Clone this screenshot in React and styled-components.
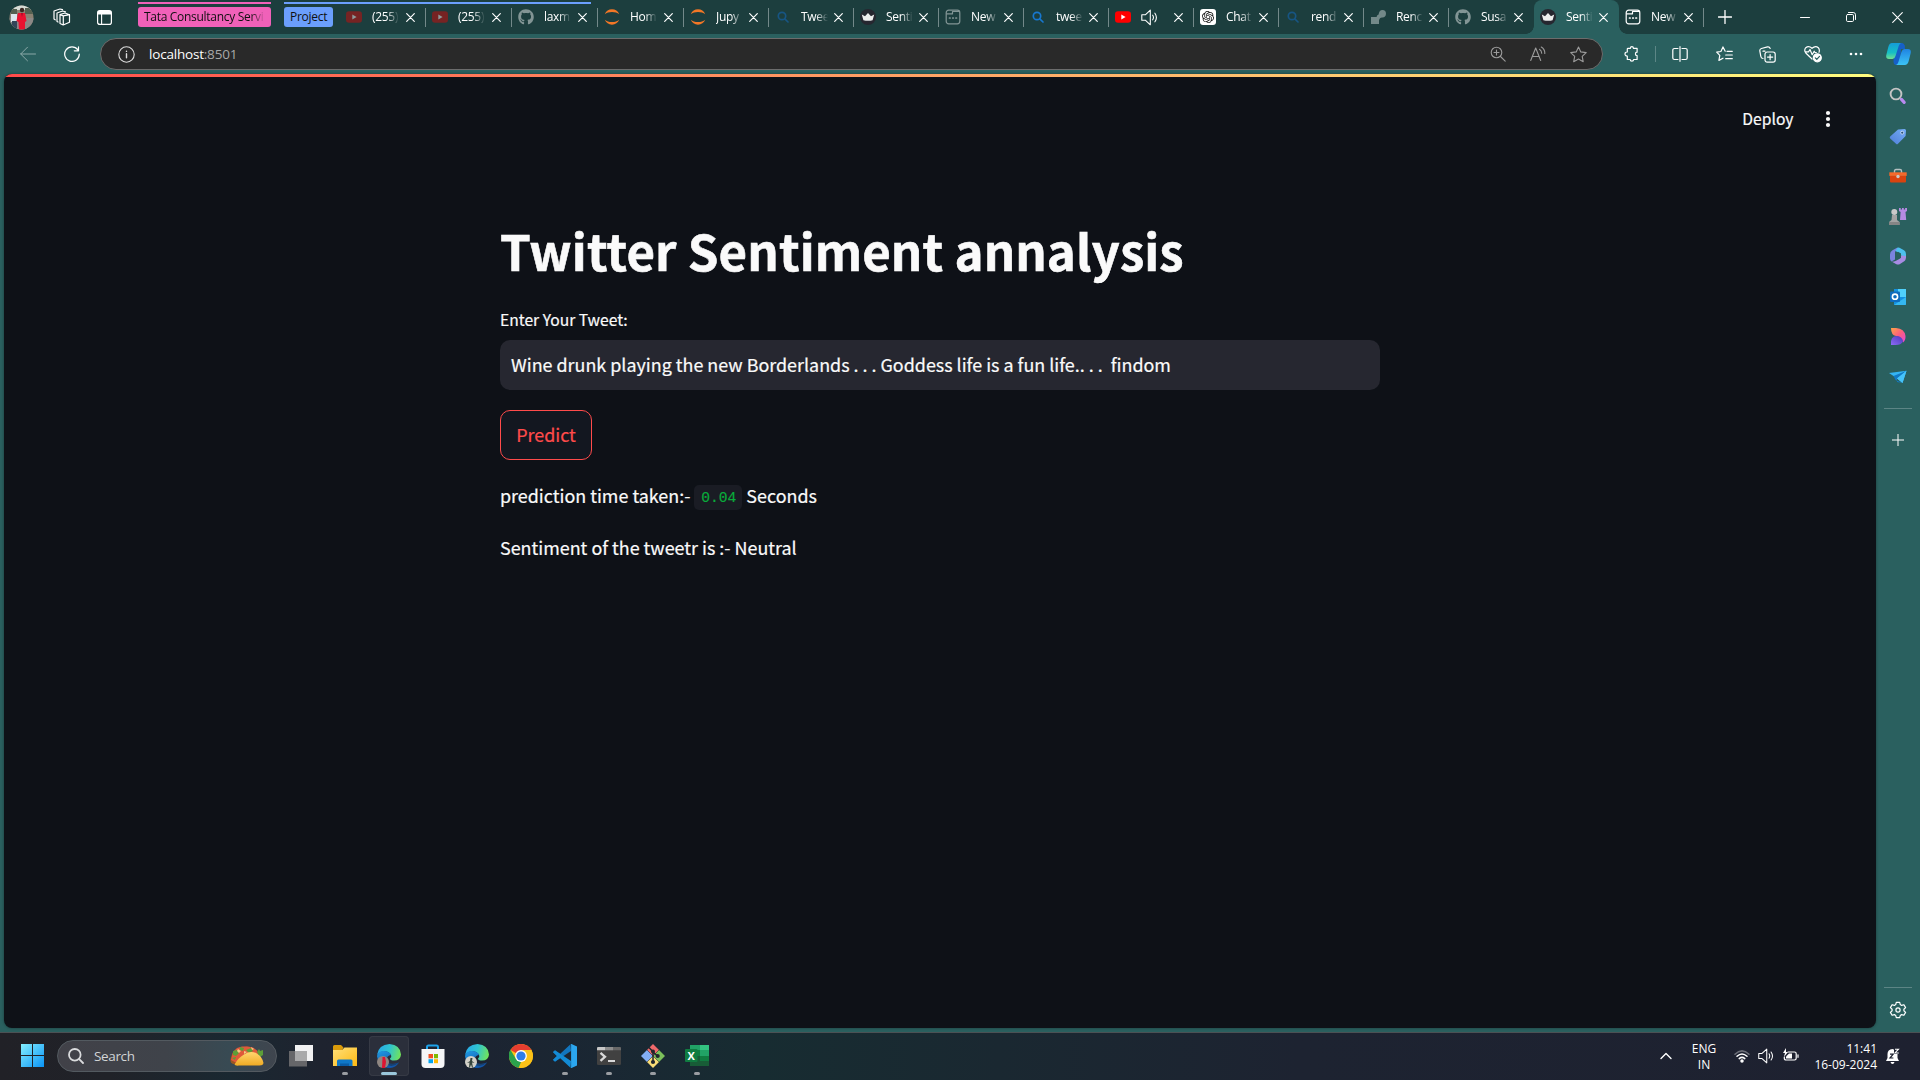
import React from "react";
import styled, { createGlobalStyle, css } from "styled-components";
import { FaGithub } from "react-icons/fa";
import { SiOpenai } from "react-icons/si";

const ui = `"Open Sans", "Noto Sans", sans-serif`;
const source = `"Noto Sans CJK SC", "Noto Sans CJK JP", sans-serif`;

const GlobalStyle = createGlobalStyle`
  * { box-sizing: border-box; }
  html, body { margin: 0; padding: 0; overflow: hidden; background: #2a605f; }
  svg { display: block; flex: none; }
  h1, p { margin: 0; }
  button { font: inherit; padding: 0; border: 0; background: none; color: inherit; }
`;

const Screen = styled.div`
  width: 1920px;
  height: 1080px;
  display: flex;
  flex-direction: column;
  overflow: hidden;
  background: #2a605f;
  color: #fff;
  font-family: ${ui};
`;

/* ---------- tab strip ---------- */

const TabStrip = styled.header`
  display: flex;
  height: 34px;
  flex: none;
  background: #1c3e3e;
`;

const StripTools = styled.div`
  display: flex;
  align-items: center;
  width: 138px;
  padding-left: 9px;
  gap: 19px;
`;

const TabGroup = styled.div`
  display: flex;
  margin-right: ${(p) => p.$after || 0}px;
  background: linear-gradient(${(p) => p.$color}, ${(p) => p.$color}) no-repeat 0 2px / ${(p) => p.$line}px 2px;
`;

const GroupLabel = styled.div`
  width: ${(p) => p.$width}px;
  height: 20px;
  margin: 7px ${(p) => p.$after || 0}px 0 0;
  padding: 0 6px;
  border-radius: 3px;
  background: ${(p) => p.$color};
  color: #101010;
  font-size: 12px;
  line-height: 20px;
  letter-spacing: ${(p) => p.$track}px;
  white-space: nowrap;
`;

const LabelText = styled.span`
  display: block;
  ${(p) => p.$fade && css`mask-image: linear-gradient(90deg, #000 calc(100% - 14px), transparent);`}
`;

const TabBox = styled.div`
  position: relative;
  display: flex;
  align-items: center;
  width: ${(p) => p.$width}px;
  height: 34px;
  padding-left: 6px;
  ${(p) =>
    p.$active
      ? css`
          background: #2a605f;
          border-radius: 8px 8px 0 0;
          &::before, &::after {
            content: "";
            position: absolute;
            bottom: 0;
            width: 8px;
            height: 8px;
          }
          &::before { left: -8px; background: radial-gradient(circle at 0 0, transparent 7.5px, #2a605f 8px); }
          &::after { right: -8px; background: radial-gradient(circle at 100% 0, transparent 7.5px, #2a605f 8px); }
        `
      : !p.$bare &&
        css`background: linear-gradient(#73898a, #73898a) no-repeat right 0 top 8px / 1px 19px;`}
`;

const Favicon = styled.div`
  width: 16px;
  height: 16px;
  margin-right: 10px;
  opacity: ${(p) => (p.$dim ? 0.45 : 1)};
`;

const TabTitle = styled.div`
  width: 27px;
  margin-right: ${(p) => (p.$wide ? 7 : 6)}px;
  font-size: 12px;
  line-height: 16px;
  letter-spacing: -0.3px;
  white-space: nowrap;
  mask-image: linear-gradient(90deg, #000 15px, transparent 27px);
`;

const NewTab = styled.button`
  width: 42px;
  display: flex;
  align-items: center;
  justify-content: center;
`;

const WindowButtons = styled.div`
  display: flex;
  margin-left: auto;
`;

const WindowButton = styled.button`
  width: 46px;
  display: flex;
  align-items: center;
  justify-content: center;
`;

/* ---------- toolbar ---------- */

const Toolbar = styled.div`
  display: flex;
  align-items: center;
  height: 40px;
  flex: none;
`;

const ToolButton = styled.button`
  display: flex;
  flex: none;
  align-items: center;
  justify-content: center;
  width: ${(p) => p.$width || 44}px;
  height: 32px;
  padding-left: ${(p) => p.$shift || 0}px;
  opacity: ${(p) => p.$opacity || 1};
`;

const AddressBar = styled.div`
  display: flex;
  flex: none;
  align-items: center;
  width: 1503px;
  height: 32px;
  margin-left: 12px;
  padding: 0 4px 0 17px;
  border: 1px solid #6c6c6c;
  border-radius: 16px;
  background: #292929;
  color: #9b9b9b;
`;

const Url = styled.div`
  flex: 1;
  margin-left: 14px;
  font-size: 13.5px;
  line-height: 20px;
  letter-spacing: -0.2px;
  color: #a8a8a8;
  strong { font-weight: 400; color: #fff; }
`;

const ToolSeparator = styled.i`
  width: 1px;
  height: 16px;
  background: #5c8686;
`;

/* ---------- body: page and side bar ---------- */

const Body = styled.div`
  display: flex;
  height: 958px;
  flex: none;
  padding: 0 0 4px 4px;
`;

const Page = styled.main`
  width: 1872px;
  height: 954px;
  border-radius: 8px;
  overflow: hidden;
  background: #0e1117;
  box-shadow: 0 0 3px rgba(0, 0, 0, 0.4);
  font-family: ${source};
  color: #fafafa;
  -webkit-text-stroke: 0.2px currentColor;
`;

const Decoration = styled.div`
  height: 3px;
  background: linear-gradient(90deg, #ff4b4b, #fffd80);
`;

const AppHeader = styled.div`
  display: flex;
  justify-content: flex-end;
  align-items: center;
  height: 84px;
  padding-right: 44px;
`;

const Deploy = styled.button`
  margin-right: 30.5px;
  font-size: 15.65px;
  line-height: 24px;
`;

const Content = styled.section`
  width: 880px;
  margin: 56px auto 0;
  font-size: 17.91px;
`;

const Title = styled.h1`
  font-size: 49.2px;
  font-weight: 700;
  line-height: 66px;
  letter-spacing: 0.08px;
  -webkit-text-stroke: 0.6px #fafafa;
  white-space: nowrap;
`;

const FieldLabel = styled.label`
  display: block;
  margin: 22px 0 5px;
  font-size: 15.65px;
  line-height: 30px;
`;

const Input = styled.div`
  height: 50px;
  padding: 0 11px;
  border-radius: 10px;
  background: #262730;
  line-height: 48px;
  white-space: pre;
`;

const Predict = styled.button`
  display: block;
  width: 92px;
  height: 50px;
  margin: 20px 0 19px;
  padding-bottom: 2px;
  border: 1px solid #ff4b4b;
  border-radius: 10px;
  background: #131720;
  color: #ff4b4b;
`;

const Line = styled.p`
  display: flex;
  align-items: center;
  height: 32px;
  margin-bottom: 20px;
  white-space: pre;
`;

const Code = styled.code`
  width: 48px;
  height: 25px;
  margin: 4px 4px 0 4px;
  padding-left: 1px;
  border-radius: 5px;
  background: #1a1c24;
  color: #09ab3b;
  font: 14.6px/27px "Liberation Mono", monospace;
  text-align: center;
`;

const SideBar = styled.aside`
  width: 44px;
  display: flex;
  flex-direction: column;
  align-items: center;
  padding-top: 2px;
`;

const SideItem = styled.div`
  width: 44px;
  height: ${(p) => p.$height || 40.1}px;
  display: flex;
  align-items: center;
  justify-content: center;
`;

const SideRule = styled.i`
  width: 28px;
  height: 1px;
  background: #5c8585;
  margin-top: ${(p) => p.$top || 0};
  margin-bottom: ${(p) => p.$after || 0};
`;

/* ---------- task bar ---------- */

const TaskBar = styled.footer`
  display: flex;
  align-items: center;
  height: 48px;
  flex: none;
  padding: 0 0 1px 21px;
  border-top: 1px solid #4b5154;
  background: linear-gradient(90deg, #212127 0, #202228 110px, #1a2831 230px, #1e232f 320px, #1d2230 420px, #1a2733 600px, #172c31 760px, #1a2831 1000px, #1d2331 1300px, #1e2130 1920px);
`;

const SearchBox = styled.div`
  display: flex;
  align-items: center;
  width: 220px;
  height: 32px;
  margin: 0 2px 0 12px;
  padding: 0 12px 0 10px;
  border: 1px solid #535a60;
  border-radius: 16px;
  background: linear-gradient(90deg, #414148, #3f434a 50%, #384a53 78%, #3f454e);
  color: #d2d4d6;
  font-size: 13.5px;
  letter-spacing: -0.35px;
`;

const SearchText = styled.span`
  flex: 1;
  margin-left: 10px;
`;

const TaskItem = styled.div`
  display: flex;
  flex-direction: column;
  align-items: center;
  width: 40px;
  height: 40px;
  margin: 0 2px;
  padding-top: 7px;
  border-radius: 4px;
  ${(p) => p.$active && css`background: #2b2f3b; box-shadow: inset 0 0 0 1px #363a45;`}
`;

const Indicator = styled.i`
  width: ${(p) => (p.$active ? 16 : 6)}px;
  height: 3px;
  margin-top: 5px;
  border-radius: 2px;
  background: ${(p) => (p.$active ? "#9ac7dc" : "#9a9da2")};
`;

const Tray = styled.div`
  display: flex;
  align-items: center;
  margin-left: auto;
  padding-right: 19px;
`;

const TrayText = styled.div`
  width: ${(p) => p.$width}px;
  margin: 0 ${(p) => p.$after}px 0 ${(p) => p.$before}px;
  padding-top: 1px;
  font-size: 12px;
  line-height: 16px;
  text-align: ${(p) => p.$align};
  white-space: nowrap;
`;

const TrayIcons = styled.div`
  display: flex;
  gap: 8px;
`;

/* ---------- drawings ---------- */

const Stroke = ({ w = 16, h, box, sw = 1, color = "currentColor", children }) => (
  <svg width={w} height={h || w} viewBox={box || `0 0 ${w} ${h || w}`} fill="none" stroke={color} strokeWidth={sw} strokeLinecap="round" strokeLinejoin="round">
    {children}
  </svg>
);

const Cross = ({ size = 9, sw = 1.2 }) => (
  <Stroke w={size} sw={sw}><path d={`M.7.7 ${size - 0.7} ${size - 0.7}M${size - 0.7}.7.7 ${size - 0.7}`} /></Stroke>
);

const Avatar = () => (
  <svg width="25" height="25" viewBox="0 0 25 25">
    <clipPath id="avatar"><circle cx="12.5" cy="12.5" r="12" /></clipPath>
    <g clipPath="url(#avatar)">
      <path d="M0 0h25v25H0z" fill="#8b8273" />
      <path d="M0 0h25v5H0z" fill="#d8dcd6" />
      <path d="M2 4h6v5H2zM16 3h8v6h-8z" fill="#556050" />
      <path d="M0 13h25v12H0z" fill="#8c8886" />
      <path d="M2 9h6v8H2z" fill="#dce6ec" /><path d="M3 16h5v9H3z" fill="#344458" />
      <circle cx="13" cy="5" r="2.2" fill="#3d2722" />
      <path d="M9 8h7l1.500 8-1.500 1v8h-6l-.5-8-2-1z" fill="#ea1230" />
      <path d="M12 8h2l-1 4z" fill="#a90824" />
    </g>
  </svg>
);

const Workspaces = () => (
  <Stroke w={18} sw={1.2}>
    <path d="M7 6.500 12 5l4.500 1.700v7.500L10.200 17 7 15.500zM7 6.600l3.300 1.300 6.200-1.200M10.300 8v9" />
    <path d="M5 14 4 13.500V5l5.500-2 3 .8M2.200 11.800 1 11V3l6-2 2.500.7" />
  </Stroke>
);

const TabActionsBox = styled.div`
  margin-left: 7px;
`;
const TabActions = () => (
  <TabActionsBox>
    <svg width="15" height="15" viewBox="0 0 15 15"><rect x=".6" y=".6" width="13.8" height="13.8" rx="2.2" fill="none" stroke="#fff" strokeWidth="1.2" /><path d="M1 1h13v3.500H1z" fill="#fff" /><path d="M4.600 4v10" stroke="#fff" strokeWidth="1.100" /></svg>
  </TabActionsBox>
);

const YouTube = () => (
  <svg width="16" height="16" viewBox="0 0 16 16"><rect y="2.3" width="16" height="11.4" rx="3" fill="#f00" /><path d="M6.3 5.6 10.6 8l-4.3 2.4z" fill="#fff" /></svg>
);
const YouTubeMuted = () => (
  <svg width="16" height="16" viewBox="0 0 16 16"><rect y="2.3" width="16" height="11.4" rx="3" fill="#762323" /><path d="M6.3 5.6 10.6 8l-4.3 2.4z" fill="#8e9a9a" /></svg>
);
const Jupyter = () => (
  <svg width="16" height="16" viewBox="0 0 16 16" fill="#f37726"><path d="M.8 5.200C2 2.200 4.700.3 8 .3s6 1.900 7.200 4.900C13.400 3.600 10.900 2.900 8 2.900S2.600 3.600.8 5.200zM.8 10.800C2 13.800 4.700 15.700 8 15.700s6-1.900 7.200-4.900c-1.800 1.600-4.300 2.300-7.200 2.300s-5.400-.7-7.200-2.300z" /></svg>
);
const BingSearch = ({ color }) => (
  <Stroke w={16} sw={1.7} color={color}><circle cx="7" cy="7" r="3.7" /><path d="M9.800 9.900 13 13" /></Stroke>
);
const Crown = () => (
  <svg width="16" height="16" viewBox="0 0 16 16"><circle cx="8" cy="8" r="8" fill="#262730" /><path d="M1.800 5.600 5 7.300 8 3.900l3 3.400 3.200-1.700-1.600 5.600q-4.600 1-9.200 0z" fill="#eee" /></svg>
);
const NewPage = () => (
  <Stroke w={16} sw={1.2}><rect x="1.200" y="1.200" width="13.600" height="13.600" rx="2.500" /><path d="M1.500 4.800h6V2.500h6.500" /><path d="M4.500 9h.6M7.700 9h.6M10.900 9h.6" strokeWidth="1.700" /></Stroke>
);
const ChatGpt = () => (
  <svg width="16" height="16" viewBox="0 0 16 16"><rect width="16" height="16" rx="3" fill="#fff" /><g transform="translate(2 2)"><SiOpenai size={12} color="#111" /></g></svg>
);
const RenderMark = () => (
  <svg width="16" height="16" viewBox="0 0 16 16" fill="#dce5e5"><path d="M1 8h5.600q0-2 2-2.500C9 3 10 1 12.500 1A3.700 3.700 0 0 1 12 8.400q-2.500 0-3 3V15H1z" /></svg>
);

const Speaker = ({ w = 17 }) => (
  <Stroke w={w} box="0 0 17 17" sw={1.1}><path d="M.8 5.800h3.500L9.300 1.200v14.600l-5-4.600H.8zM11.700 6.200q1.500 2.300 0 4.600M13.900 4.200q3 4.300 0 8.600" /></Stroke>
);

const Copilot = () => (
  <svg width="25" height="24" viewBox="0 0 25 24">
    <defs>
      <linearGradient id="cpA" x1="0" y1="0" x2="0" y2="1"><stop offset="0" stopColor="#159bd8" /><stop offset=".6" stopColor="#16bfc4" /><stop offset="1" stopColor="#71df91" /></linearGradient>
      <linearGradient id="cpB" x1="0" y1="0" x2="0" y2="1"><stop offset="0" stopColor="#1f83e2" /><stop offset="1" stopColor="#3cc4f5" /></linearGradient>
    </defs>
    <path d="M8 1h8q2 0 2.800 2.500L19 7h-4L14 23h-4q-2 0-2.500-3z" fill="#1660c7" />
    <path d="M6 1h9q-1.600.8-2.300 3L9.500 14q-.8 3-3 3H3q-3.500 0-2.700-4l2-8Q3.300 1 6 1z" fill="url(#cpA)" />
    <path d="M18.500 7H22q3.500 0 2.700 4l-2 8q-1 4-4 4H10q1.700-.6 2.400-3l3-10q.9-3 3.100-3z" fill="url(#cpB)" />
  </svg>
);

const Gear = () => (
  <Stroke w={18} sw={1.2}>
    <path d="m7.300 1.300 3.400 0 .6 2.300 1.300.8 2.300-.7 1.700 2.900-1.700 1.600v1.600l1.700 1.600-1.700 2.900-2.300-.7-1.300.8-.6 2.300H7.300l-.6-2.300-1.300-.8-2.300.7-1.700-2.900 1.700-1.600V8.200L1.400 6.600l1.700-2.900 2.300.7 1.300-.8z" /><circle cx="9" cy="9" r="2.100" />
  </Stroke>
);

const SideSearch = () => (
  <svg width="18" height="18" viewBox="0 0 18 18"><circle cx="7" cy="7" r="5.400" fill="none" stroke="#c5c5c5" strokeWidth="1.900" /><path d="m11 11 1.500 1.500" stroke="#aaa" strokeWidth="2" /><path d="m12.500 12.400 2.700 2.900" stroke="#b98af0" strokeWidth="3.200" strokeLinecap="round" /></svg>
);
const SideTag = () => (
  <svg width="18" height="18" viewBox="0 0 18 18"><defs><linearGradient id="tg" x1="1" y1="0" x2="0" y2="1"><stop stopColor="#75adf5" /><stop offset="1" stopColor="#4f7ed8" /></linearGradient></defs><path d="M9 2.500 15.500 2q1.500 0 1.500 1.500L16.600 9 9 16.800q-1 1-2 0L1.200 11.600q-1-1 0-2z" fill="url(#tg)" /><circle cx="13.200" cy="5.700" r="1.500" fill="#27517a" stroke="#dceaff" strokeWidth=".8" /></svg>
);
const SideToolbox = () => (
  <svg width="18" height="16" viewBox="0 0 18 16"><path d="M5.500 5V3q0-1.500 1.500-1.500h4q1.500 0 1.500 1.500v2" fill="none" stroke="#b6c0c0" strokeWidth="1.400" /><path d="M.3 4.300h17.400v3.600H.3z" fill="#f4692b" /><path d="M1 7.900h16v5.600q0 1-1 1H2q-1 0-1-1z" fill="#d9430f" /><circle cx="9" cy="8.500" r="1.700" fill="#c9c9c9" /></svg>
);
const SideGames = () => (
  <svg width="18" height="18" viewBox="0 0 18 18"><path d="M10 1h1.700v1.500h1.300V1h1.800v1.500h1.300V1H18v3l-1.500 1 .7 8H11l.6-8L10 4z" fill="#b58ae2" /><circle cx="5.300" cy="5" r="3" fill="#c9c9c9" /><path d="M3 8h5v5l2.500 2v3H0v-3l2.500-2z" fill="#a3a3a3" /><path d="M0 15h10.500v3H0z" fill="#858585" /></svg>
);
const SideM365 = () => (
  <svg width="18" height="18" viewBox="0 0 18 18"><path d="M8 .8 3.500 3.300Q1 4.700 1 7.500v4q0 2 1.500 3l3.500-2V5.500q0-1 1-1.700L9.800 2Z" fill="#7b83df" /><path d="M8.500.6q1-.4 2 .2l4.500 2.500q2 1.200 2 4v4L12 8.500V7L6.500 4z" fill="#4cc0ef" /><path d="M17 9q.2 4-1.800 5.200L11 17q-2 1-4 0l-4.500-2.500q3 .5 5-1l4.500-2.800V8.500z" fill="#a78be3" /><path d="m6 6.500 3-1.700 3 1.700v4.200l-3 1.800-3-1.500z" fill="#2a605f" /></svg>
);
const SideOutlook = () => (
  <svg width="18" height="18" viewBox="0 0 18 18"><path d="M5 1h12v16H5z" fill="#1490df" /><path d="M9 1h8v8H9z" fill="#50d0fa" /><path d="m5 17 12-8v7q0 1-1 1z" fill="#35b8f1" /><rect x="1" y="3.500" width="10" height="10.500" rx="1" fill="#0f6cbd" /><circle cx="6" cy="8.700" r="2.600" fill="none" stroke="#fff" strokeWidth="1.600" /></svg>
);
const SideDesigner = () => (
  <svg width="18" height="18" viewBox="0 0 18 18"><defs><linearGradient id="dsA" x1="0" y1="0" x2="1" y2="1"><stop stopColor="#ffa545" /><stop offset=".5" stopColor="#fb5e7f" /><stop offset="1" stopColor="#e447d5" /></linearGradient><linearGradient id="dsB" x1="0" y1="1" x2="1" y2="0"><stop stopColor="#8c6cf5" /><stop offset="1" stopColor="#4c37bd" /></linearGradient></defs><path d="M2 0h5q8.500.5 9.500 8 .3 4-2.500 6.500-1-5.500-7-6.500Q2 7 2 0z" fill="url(#dsA)" /><path d="M2 17q-1-9 6-9 5.500.5 6 5.500-2 3.500-7.500 3.500z" fill="url(#dsB)" /></svg>
);
const SideTelegram = () => (
  <svg width="18" height="14" viewBox="0 0 18 14"><path d="M0 3 17.500.8 13.500 13 7.500 8z" fill="#34b4f3" /><path d="M4.500 6 17.500.8 8 8.500v3.500L13.500 13l-7-3z" fill="#1179c4" /><path d="M8 8.500 17.500.8 13.500 13z" fill="#46c3f9" /></svg>
);

const sideIcons = [SideSearch, SideTag, SideToolbox, SideGames, SideM365, SideOutlook, SideDesigner, SideTelegram];

const Taco = () => (
  <svg width="34" height="21" viewBox="0 0 34 21">
    <defs><linearGradient id="tc" x1="0" y1="0" x2="0" y2="1"><stop stopColor="#ffd66f" /><stop offset="1" stopColor="#efaa23" /></linearGradient></defs>
    <path d="M.5 14Q2 2 13 1q10-2 14 6l3 5-5 6H3q-3-1-2.500-4z" fill="#9a5721" />
    <path d="m3 6 4-4 5-1.500L17 .5l6 1 4 3 1.500 3-3 2-20 7L1 14z" fill="#df593a" />
    <path d="m3 5 4-1 2 3-3 3-3-1zM10 1l4 1-1 3-3-1zM16 4l5-2 2 3-4 2zM27 6l2-3 1 2 3-1v5l-3 2zM2 12l4-1-1 3z" fill="#5c9e38" />
    <path d="m8 3 3 2-2 2-2-2zM14 5l3 1-3 2zM21 1l3 2-2 1z" fill="#f3cc84" />
    <path d="M4.500 18.500Q8 12 14 8.500q6-4 12-1.500 6 3 7.500 10-.5 2.500-4 2.500H9q-4 .5-4.500-1z" fill="url(#tc)" />
  </svg>
);

const TaskView = () => (
  <svg width="24" height="24" viewBox="0 0 24 24"><path d="M6 1h18v16H6z" fill="#f1f1f2" /><path d="M0 7h18v15.500H0z" fill="#666669" /><path d="M6 7h12v10H6z" fill="#a9a9aa" /></svg>
);
const Explorer = () => (
  <svg width="24" height="24" viewBox="0 0 24 24"><defs><linearGradient id="fx" x1="0" y1="0" x2="1" y2="1"><stop stopColor="#ffe07a" /><stop offset="1" stopColor="#fdb913" /></linearGradient></defs><path d="M0 2.500Q0 1 1.500 1H8l2.500 2.500L8 8H0z" fill="#d99a0b" /><path d="M0 6h9l2.500-2.500H24V22H0z" fill="url(#fx)" /><path d="M4 22v-5q0-1.500 1.500-1.500h12.500q1.500 0 1.500 1.500v5z" fill="#0f78c8" /><path d="M7 22v-2.500h9V22z" fill="#0a5ca5" /></svg>
);
const Edge = ({ red, id }) => (
  <svg width="24" height="24" viewBox="0 0 24 24">
    <defs><linearGradient id={`${id}a`} x1="0" y1=".3" x2="1" y2=".5"><stop stopColor="#28a8ea" /><stop offset=".5" stopColor="#2fc4d0" /><stop offset="1" stopColor="#70e35c" /></linearGradient><linearGradient id={`${id}b`} x1="0" y1="0" x2=".5" y2="1"><stop stopColor="#1f9ae4" /><stop offset="1" stopColor="#1255a8" /></linearGradient></defs>
    <path d="M0 11Q1.500.5 12.500 0 23.500 1 24 10.500q-.5 6-7 6-4 0-4-2 2-1.500 1-4Q10.500 6 5 7.500 1.500 8.500 0 11z" fill={`url(#${id}a)`} />
    <path d="M0 12Q1 7 6.500 7q6.500.3 7.500 4-5.500 1-4 6.500 2.500 5 12 1Q18 24.500 11 24 1 23 0 12z" fill={`url(#${id}b)`} />
    <path d="M10 12q-4 6 2 9.500 5 1.500 10-3-9 3-12-1-1.500-3 0-5.500z" fill="#174070" />
    <circle cx="6" cy="18" r="6" fill={red ? "#8f8782" : "#d3d1c8"} />
    {red ? <path d="M5.500 13h2.500l1 5-1 6H5z" fill="#dd1532" /> : <path d="M5.500 14h2l-.5 3 2.500 2-2.500-.5 1 5H7l-1-3-1 3H4l.5-5L2 19l3-2z" fill="#35443c" />}
  </svg>
);
const Store = () => (
  <svg width="24" height="24" viewBox="0 0 24 24"><path d="M6 6V3q0-1.500 1.500-1.500h8Q17 1.500 17 3v3" fill="none" stroke="#1da2ea" strokeWidth="2" /><path d="M.5 5h23v15q0 4-4 4h-15q-4 0-4-4z" fill="#f5f6f7" /><path d="M7.500 10H12v4.300H7.500z" fill="#f25022" /><path d="M13 10h4v4.300h-4z" fill="#7fba00" /><path d="M7.500 15.200H12v4H7.500z" fill="#00a4ef" /><path d="M13 15.200h4v4h-4z" fill="#ffb900" /></svg>
);
const Chrome = () => (
  <svg width="24" height="24" viewBox="0 0 24 24"><circle cx="12" cy="12" r="12" fill="#fbc117" /><path d="M12 12 1.600 6Q5 0 12 0t10.400 6z" fill="#e63d30" /><path d="M1.600 6 7 15l5 3-2.300 5.800Q3 22.500.7 16T1.600 6z" fill="#2ba24c" /><path d="M12 6h10.400Q26 13 21.500 19.300 17 24.500 9.700 23.800L17 15z" fill="#fbc117" /><circle cx="12" cy="12" r="5.900" fill="#fff" /><circle cx="12" cy="12" r="4.600" fill="#2f7de9" /></svg>
);
const VsCode = () => (
  <svg width="24" height="24" viewBox="0 0 24 24"><path d="m0 8.300 2-1.800 5 3.500L17.500.3 18 7 2 17.800 0 16l4-4z" fill="#1276be" /><path d="m0 15.800 2 1.800L7 14l10.500 9.800L18 17 2 6.300 0 8l4 4z" fill="#138bd5" /><path d="M17.500.2 18.500 0 24 2.500v19L18.500 24l-1-.2q.6-.2.600-1V1.200q0-.8-.6-1z" fill="#2ba6ef" /></svg>
);
const Terminal = () => (
  <svg width="24" height="18" viewBox="0 0 24 18"><rect width="24" height="18" rx="1.300" fill="#414141" /><path d="M0 1.300Q0 0 1.300 0H8v3.300H0z" fill="#c7c7c7" /><path d="M8 0h8v3.300H8z" fill="#8d8d8d" /><path d="M16 0h6.700Q24 0 24 1.300v2h-8z" fill="#686868" /><path d="m3.500 5.800 4.500 4-4.500 4" fill="none" stroke="#d8d8d8" strokeWidth="2.300" /><path d="M11 14h7" stroke="#fff" strokeWidth="1.600" /></svg>
);
const Git = () => (
  <svg width="24" height="24" viewBox="0 0 24 24"><path d="m12 0 6 6-6 6-6-6z" fill="#f0696b" /><path d="m18 6 6 6-6 6-6-6z" fill="#7cc05b" /><path d="m6 6 6 6-6 6-6-6z" fill="#83aef5" /><path d="m12 12 6 6-6 6-6-6z" fill="#f9dd77" /><path d="m8 3.500 4 4.200v10.800M12 8l4.500 4" fill="none" stroke="#20262d" strokeWidth="1.500" /><g fill="#20262d"><circle cx="12" cy="7.600" r="2" /><circle cx="16.700" cy="12" r="2.100" /><circle cx="12" cy="18" r="2.100" /></g><path d="M5.500 5.500 18.500 18.500M18.500 5.500 5.500 18.500" stroke="#20262d" strokeWidth=".6" opacity=".7" /></svg>
);
const ExcelArt = styled.svg`
  text { font: 700 11px ${ui}; fill: #fff; }
`;
const Excel = () => (
  <ExcelArt width="24" height="24" viewBox="0 0 24 24"><path d="M5 1h10v5H5z" fill="#21a366" /><path d="M15 1h9v5h-9z" fill="#33c481" /><path d="M5 6h10v6H5z" fill="#107c41" /><path d="M15 6h9v6h-9z" fill="#21a366" /><path d="M5 12h10v10H5z" fill="#185c37" /><path d="M15 12h9v5h-9z" fill="#107c41" /><path d="M15 17h9v5h-9z" fill="#185c37" /><rect y="5" width="12.500" height="13" rx="1" fill="#107c41" /><text x="2.500" y="15.500">X</text></ExcelArt>
);

const StartLogo = () => (
  <svg width="24" height="24" viewBox="0 0 24 24"><defs><linearGradient id="wn" x1="0" y1="0" x2="1" y2="1"><stop stopColor="#84efff" /><stop offset="1" stopColor="#0a93f5" /></linearGradient></defs><path d="M0 0h11v11H0zM12 0h11v11H12zM0 12h11v11H0zM12 12h11v11H12z" fill="url(#wn)" /></svg>
);

/* ---------- data ---------- */

const groupTabs = [
  { title: "(255)", icon: <YouTubeMuted /> },
  { title: "(255)", icon: <YouTubeMuted /> },
  { title: "laxm", icon: <FaGithub size={16} />, dim: true },
];

const looseTabs = [
  { title: "Hom", icon: <Jupyter />, width: 86 },
  { title: "Jupy", icon: <Jupyter /> },
  { title: "Twee", icon: <BingSearch color="#175583" /> },
  { title: "Senti", icon: <Crown /> },
  { title: "New", icon: <NewPage />, dim: true },
  { title: "twee", icon: <BingSearch color="#1777cf" /> },
  { icon: <YouTube />, sound: true },
  { title: "Chat", icon: <ChatGpt /> },
  { title: "rend", icon: <BingSearch color="#175583" /> },
  { title: "Renc", icon: <RenderMark />, dim: true },
  { title: "Susa", icon: <FaGithub size={16} />, dim: true, bare: true },
  { title: "Senti", icon: <Crown />, active: true },
  { title: "New", icon: <NewPage /> },
];

const taskItems = [
  { icon: <TaskView /> },
  { icon: <Explorer />, open: true },
  { icon: <Edge id="e1" red />, open: true, active: true },
  { icon: <Store /> },
  { icon: <Edge id="e2" /> },
  { icon: <Chrome /> },
  { icon: <VsCode />, open: true },
  { icon: <Terminal />, open: true },
  { icon: <Git />, open: true },
  { icon: <Excel />, open: true },
];

const IconSlot = styled.div`
  height: 24px;
  display: flex;
  align-items: center;
  padding-top: 1px;
`;

const SoundSlot = styled.div`
  width: 33px;
`;

const Tab = ({ title, icon, dim, sound, active, bare, width = 85 }) => (
  <TabBox $width={width} $active={active} $bare={bare}>
    <Favicon $dim={dim}>{icon}</Favicon>
    {sound ? <SoundSlot><Speaker /></SoundSlot> : <TabTitle $wide={width > 85}>{title}</TabTitle>}
    <Cross />
  </TabBox>
);

const PageMenu = () => (
  <svg width="8" height="18" viewBox="0 0 8 18" fill="#fafafa"><circle cx="4" cy="3" r="2.100" /><circle cx="4" cy="9" r="2.100" /><circle cx="4" cy="15" r="2.100" /></svg>
);

export default function App() {
  return (
    <Screen>
      <GlobalStyle />
      <TabStrip>
        <StripTools><Avatar /><Workspaces /><TabActions /></StripTools>
        <TabGroup $color="#f061b9" $line={133} $after={13}>
          <GroupLabel $width={133} $color="#f061b9" $track={-0.3}><LabelText $fade>Tata Consultancy Servi</LabelText></GroupLabel>
        </TabGroup>
        <TabGroup $color="#6b9ffc" $line={307}>
          <GroupLabel $width={49} $color="#6b9ffc" $after={7} $track={-0.25}><LabelText>Project</LabelText></GroupLabel>
          {groupTabs.map((t, i) => <Tab key={i} {...t} width={86} />)}
        </TabGroup>
        {looseTabs.map((t, i) => <Tab key={i} {...t} />)}
        <NewTab><Stroke w={14} sw={1.3}><path d="M7 .5v13M.5 7h13" /></Stroke></NewTab>
        <WindowButtons>
          <WindowButton><Stroke w={10}><path d="M.5 5.500h9" /></Stroke></WindowButton>
          <WindowButton><Stroke w={10}><rect x=".5" y="2.500" width="7" height="7" rx="1.200" /><path d="M2.500.5h4.700q2.300 0 2.300 2.300v4.700" /></Stroke></WindowButton>
          <WindowButton><Cross size={11} sw={1.1} /></WindowButton>
        </WindowButtons>
      </TabStrip>

      <Toolbar>
        <ToolButton $width={56} $opacity={0.45}><Stroke w={16}><path d="M15.500 8H.7M7.500 1.200.7 8l6.800 6.800" /></Stroke></ToolButton>
        <ToolButton $width={32}><Stroke w={16} sw={1.2}><path d="M13.900 3.800A7.300 7.300 0 1 0 15.300 8M14.500.8v4H10.300" /></Stroke></ToolButton>
        <AddressBar>
          <Stroke w={17} color="#dcdcdc" sw={1.1}><circle cx="8.500" cy="8.500" r="7.700" /><path d="M8.500 7.800v4M8.500 5.200v.2" strokeWidth="1.400" /></Stroke>
          <Url><strong>localhost</strong>:8501</Url>
          <ToolButton $width={40}><Stroke w={16} sw={1.1}><circle cx="6.500" cy="6.500" r="5.300" /><path d="m10.500 10.500 4.700 4.700M6.500 4v5M4 6.500h5" /></Stroke></ToolButton>
          <ToolButton $width={40}><Stroke w={16} sw={1.1}><path d="m.7 14.500 5-12.500 5 12.500M2.300 10.500h6.800M9.500 3.300q2.200 1.500 2.200 4M11.300 1q3.700 2.300 3.500 6.500" /></Stroke></ToolButton>
          <ToolButton $width={40}><Stroke w={17} sw={1.1}><path d="m8.500 1 2.300 4.900 5.400.7-4 3.700 1 5.400-4.700-2.600-4.800 2.600 1-5.400-4-3.700 5.500-.7z" /></Stroke></ToolButton>
        </AddressBar>
        <ToolButton $width={52} $shift={5}><Stroke w={16} sw={1.2}><path d="M4 2.300h2.400q0-1.600 1.500-1.600t1.500 1.600h3.700v3.900q-1.700 0-1.700 1.700t1.700 1.700v3.900H9.600q0 1.700-1.700 1.700t-1.700-1.700H3.300V10Q1 10 1 8t2.300-2V3q0-.7.7-.7z" /></Stroke></ToolButton>
        <ToolSeparator />
        <ToolButton $width={47}><Stroke w={16} sw={1.2}><path d="M6 2.500H2.500Q.8 2.500.8 4v8q0 1.500 1.700 1.500H6M10 2.500h3.500q1.700 0 1.700 1.500v8q0 1.500-1.700 1.500H10M8 .7v14.600" /></Stroke></ToolButton>
        <ToolButton $width={42}><Stroke w={17} sw={1.2}><path d="M9.200 5.200 7 .9 4.900 5.500l-4.200.7 3.100 3.200-.9 5L7 12.200M11 5.300h5.300M9.700 9h6.600M9.700 12.700h6.600" /></Stroke></ToolButton>
        <ToolButton $width={45}><Stroke w={17} sw={1.2}><rect x="6" y="6" width="10.200" height="10.200" rx="2.200" /><path d="M11.100 8.500v5.200M8.500 11.100h5.200M4 12.500q-2-.2-2.200-2.200L.8 4.800Q.7 3 2.400 2.500l6.100-1.600q2-.3 2.700 1.600M4 5.200h2" /></Stroke></ToolButton>
        <ToolButton $width={46}><Stroke w={18} sw={1.2}><path d="M8 14 1.800 8Q-.3 5 1.800 2.700 4.700.3 8 3.300q3.500-3 6.300-.6Q16 5 15 7.300M1.500 6.800h3L6 4.500l2.200 5.200 2-3.500.8 1.300h1.300" /><circle cx="13.300" cy="12.800" r="4" fill="#fff" stroke="#fff" /><path d="m11.300 12.900 1.500 1.500 2.700-3" stroke="#2a605f" /></Stroke></ToolButton>
        <ToolButton $width={40}><svg width="14" height="4" fill="#fff"><circle cx="2" cy="2" r="1.300" /><circle cx="7" cy="2" r="1.300" /><circle cx="12" cy="2" r="1.300" /></svg></ToolButton>
        <ToolButton $width={44}><Copilot /></ToolButton>
      </Toolbar>

      <Body>
        <Page>
          <Decoration />
          <AppHeader><Deploy>Deploy</Deploy><PageMenu /></AppHeader>
          <Content>
            <Title>Twitter Sentiment annalysis</Title>
            <FieldLabel>Enter Your Tweet:</FieldLabel>
            <Input>{"Wine drunk playing the new Borderlands . . . Goddess life is a fun life.. . .  findom"}</Input>
            <Predict>Predict</Predict>
            <Line>prediction time taken:-<Code>0.04</Code>Seconds</Line>
            <Line>Sentiment of the tweetr is :- Neutral</Line>
          </Content>
        </Page>
        <SideBar>
          {sideIcons.map((Icon, i) => <SideItem key={i}><Icon /></SideItem>)}
          <SideRule $top="11px" />
          <SideItem $height={62}><Stroke w={12}><path d="M6 .3v11.400M.3 6h11.400" /></Stroke></SideItem>
          <SideRule $top="auto" $after="4px" />
          <SideItem $height={36}><Gear /></SideItem>
        </SideBar>
      </Body>

      <TaskBar>
        <StartLogo />
        <SearchBox>
          <Stroke w={16} sw={1.8} color="#dadbdd"><circle cx="6.800" cy="6.800" r="5.800" /><path d="m11.200 11.200 3.800 3.800" /></Stroke>
          <SearchText>Search</SearchText>
          <Taco />
        </SearchBox>
        {taskItems.map((t, i) => (
          <TaskItem key={i} $active={t.active}>
            <IconSlot>{t.icon}</IconSlot>
            {t.open && <Indicator $active={t.active} />}
          </TaskItem>
        ))}
        <Tray>
          <Stroke w={12} sw={1.4}><path d="m1 8.500 5-5 5 5" /></Stroke>
          <TrayText $width={30} $before={17} $after={15} $align="center">ENG<br />IN</TrayText>
          <TrayIcons>
            <Stroke w={16} sw={1.5}><path d="M1 6.200Q8-.5 15 6.200" opacity=".35" /><path d="M3 8.300q5-4.700 10 0M5.200 10.600q2.800-2.500 5.600 0" /><circle cx="8" cy="13" r="1" fill="#fff" /></Stroke>
            <Speaker w={16} />
            <Stroke w={17} h={16} sw={1.2}><path d="M6 4h6.500q1.700 0 1.700 1.700v4.600q0 1.700-1.700 1.700H4q-1.700 0-1.700-1.700V9M16 6.800v2.500" /><path d="M4 10.500V8.500l3-3V5.500h3v5z" fill="#fff" stroke="none" /><path d="M4 0 1 5h2L2 9l4-5H4z" fill="#fff" stroke="none" /></Stroke>
          </TrayIcons>
          <TrayText $width={71} $before={7} $after={8} $align="right">11:41<br />16-09-2024</TrayText>
          <svg width="16" height="17" viewBox="0 0 16 17"><path d="M2.500 6q0-4.500 5-5l5 2V10l1.500 3H1l1.500-3zM5.500 14h4q-.5 2-2 2t-2-2z" fill="#fff" /><path d="M5 6.200h3.200L5 10h3.400" fill="none" stroke="#1e2230" strokeWidth="1.200" /><path d="M9 0h6v6H9z" fill="#1e2230" /><path d="M10 1.200h3.500L10 5h3.800" fill="none" stroke="#fff" strokeWidth="1.100" /></svg>
        </Tray>
      </TaskBar>
    </Screen>
  );
}
